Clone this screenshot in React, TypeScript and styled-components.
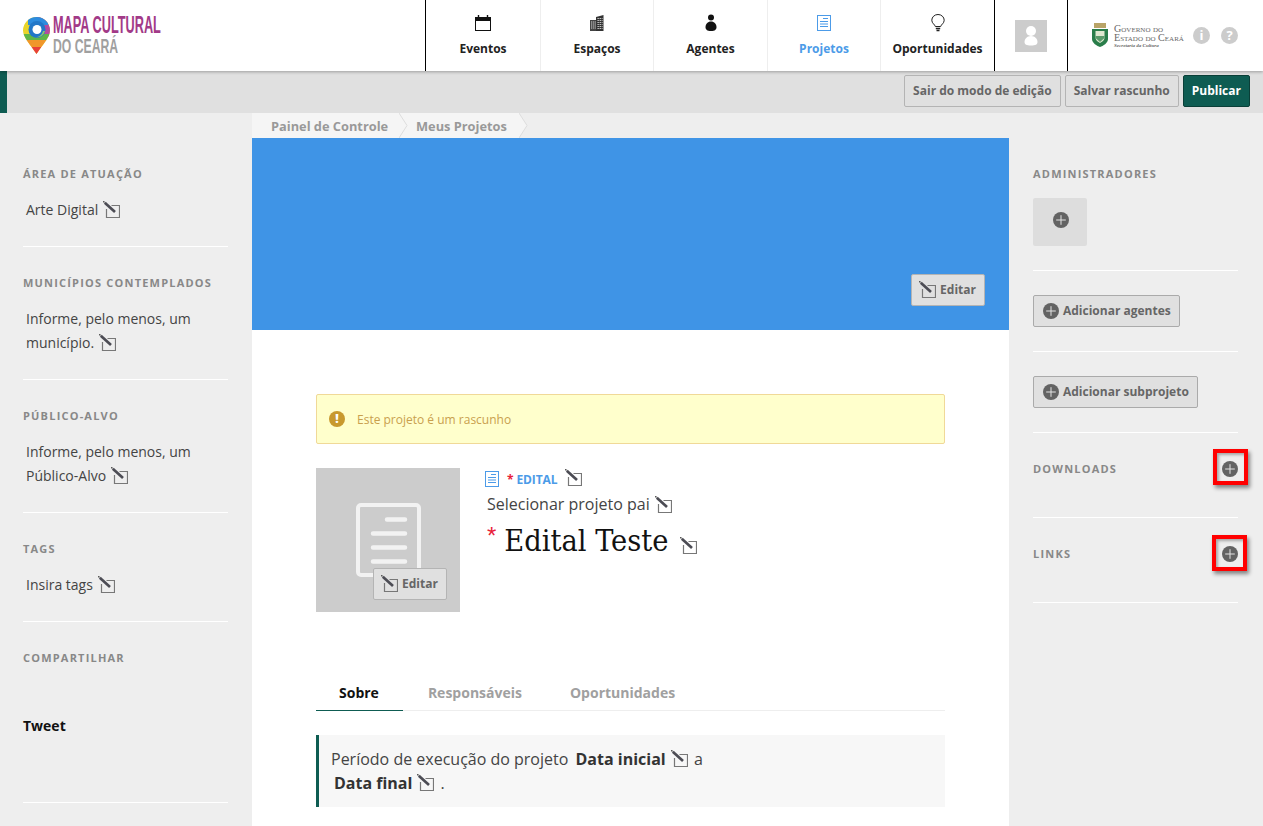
import React from "react";
import styled, { createGlobalStyle } from "styled-components";

const Global = createGlobalStyle`
  html, body { margin: 0; padding: 0; overflow: hidden; height: 826px; background: #eee; }
  * { box-sizing: border-box; }
  body { font-family: "Open Sans", "Liberation Sans", sans-serif; font-size: 14px; color: #333; }
`;

const Page = styled.div`width: 1263px; height: 826px; overflow: hidden; position: relative;`;
const Header = styled.header`
  height: 71px; background: #fff; display: flex; position: relative; z-index: 2;
  box-shadow: 0 1px 3px rgba(0,0,0,.3);
`;
const Logo = styled.div`display: flex; padding: 17px 0 0 23px; gap: 3px; width: 425px; flex: none;`;
const LogoText = styled.div`margin-top: -2px; white-space: nowrap;`;
const LogoLine = styled.div<{ $size: number; $scale: number; $color: string }>`
  font-family: "Liberation Sans", sans-serif; font-weight: 700; font-size: ${p => p.$size}px; line-height: 21px; height: 21px;
  width: 200px; transform: scaleX(${p => p.$scale}); transform-origin: left top; color: ${p => p.$color};
`;
const Nav = styled.nav`display: flex; border-left: 1px solid #000; border-right: 1px solid #000; flex: none;`;
const NavItem = styled.a<{ $w: number; $active?: boolean }>`
  width: ${p => p.$w}px; display: flex; flex-direction: column; align-items: center;
  border-right: 1px solid #eee; font-size: 12px; font-weight: 700;
  color: ${p => (p.$active ? "#4c9be8" : "#222")}; padding-top: 14px;
  &:last-child { border-right: 0; }
  svg { height: 18px; margin-bottom: 9px; }
  span { line-height: 16px; }
`;
const UserCell = styled.div`width: 73px; flex: none; border-right: 1px solid #000; display: flex; align-items: center; justify-content: center;`;
const UserPic = styled.div`width: 32px; height: 32px; background: #ccc;`;
const Gov = styled.div`flex: 1; display: flex; align-items: center; padding: 0 0 1px 23px;`;
const GovText = styled.div`
  font-family: "Liberation Serif", serif; font-variant: small-caps; font-size: 10.1px; line-height: 9px; color: #666;
  margin: 0 12px 0 5px; white-space: nowrap; padding-top: 3px; width: 67px;
  small { display: block; font-size: 5px; line-height: 7px; font-style: italic; font-variant: normal; font-weight: 700; }
`;
const Round = styled.div`
  width: 17px; height: 17px; border-radius: 50%; background: #ccc; color: #fff; flex: none; margin-right: 11px;
  display: flex; align-items: center; justify-content: center; font-size: 13px; font-weight: 700; line-height: 1;
`;
const EditBar = styled.div`
  height: 42px; background: #e0e0e0; border-left: 7px solid #0e5c52; display: flex; justify-content: flex-end;
  gap: 4px; padding: 4px 13px 0 0;
`;
const BarButton = styled.button<{ $primary?: boolean }>`
  height: 32px; padding: 0 8px 2px; border-radius: 2px; font: 700 12px "Open Sans", sans-serif;
  border: 1px solid ${p => (p.$primary ? "#0a3f38" : "#b4b4b4")};
  background: ${p => (p.$primary ? "#0e5c52" : "#e0e0e0")}; color: ${p => (p.$primary ? "#fff" : "#666")};
`;
const Columns = styled.div`display: grid; grid-template-columns: 252px 757px 254px; height: 713px;`;
const Side = styled.aside<{ $right?: boolean }>`
  background: #eee; padding: 25px ${p => (p.$right ? "25px" : "24px")} 0 ${p => (p.$right ? "24px" : "23px")};
`;
const Section = styled.section<{ $tall?: boolean }>`
  position: relative; border-bottom: 1px solid #fff; padding: 27px 0 24px;
  height: ${p => (p.$tall ? "181px" : "auto")};
`;
const SectionHead = styled.div`display: flex; justify-content: space-between; align-items: center;`;
const Title = styled.h4`
  margin: 0; font-size: 11px; line-height: 18px; font-weight: 700; letter-spacing: 1.2px; color: #888; text-transform: uppercase; white-space: nowrap;
`;
const SideText = styled.p`margin: 15px 0 0; padding-left: 3px; line-height: 24px; color: #444;`;
const Tweet = styled.div`margin-top: 47px; font-weight: 700; color: #111; line-height: 24px;`;
const Main = styled.main`background: #fff; position: relative;`;
const Crumbs = styled.div`height: 25px; display: flex; background: #eee;`;
const Crumb = styled.div<{ $w: number; $first?: boolean }>`
  width: ${p => p.$w}px; position: relative; background: #f5f5f5; color: #999; font-weight: 700; font-size: 12.8px; white-space: nowrap;
  line-height: 26px; padding-left: ${p => (p.$first ? 19 : 17)}px; flex: none;
  svg { position: absolute; left: 100%; top: 0; z-index: 1; }
`;
const Cover = styled.div`
  height: 192px; background: #3f94e6; display: flex; justify-content: flex-end; align-items: flex-end; padding: 24px;
`;
const EditButton = styled.button`
  height: 32px; padding: 0 8px 2px 7px; display: flex; align-items: center; gap: 4px; background: #e0e0e0; border: 1px solid #b4b4b4;
  border-radius: 2px; font: 700 12px "Open Sans", sans-serif; color: #666;
`;
const Content = styled.div`padding: 64px 64px 0;`;
const Alert = styled.div`
  height: 50px; background: #ffc; border: 1px solid #f0d998; border-radius: 2px; display: flex; align-items: center; gap: 12px;
  padding-left: 12px; font-size: 12px; color: #c9a04e;
`;
const AlertDot = styled.span`
  width: 16px; height: 16px; border-radius: 50%; background: #c8992e; color: #fff; font-weight: 800; font-size: 12px;
  display: flex; align-items: center; justify-content: center; line-height: 1;
`;
const ProjectHead = styled.div`display: flex; margin-top: 24px; height: 144px; gap: 24px;`;
const Avatar = styled.div`width: 144px; height: 144px; background: #ccc; position: relative; flex: none; display: flex; padding: 35px 0 0 40px;`;
const AvatarEdit = styled(EditButton)`position: absolute; left: 57px; top: 100px;`;
const ProjectInfo = styled.div`padding-top: 1px; flex: 1;`;
const TypeRow = styled.div`display: flex; align-items: center; height: 20px; font-size: 12px; font-weight: 700; color: #4c9be8; letter-spacing: -.1px;`;
const Star = styled.span`color: #e8213a; margin: 0 3px 0 7px;`;
const Parent = styled.div`margin: 3px 0 0 3px; font-size: 16px; line-height: 24px; color: #444; display: flex; align-items: center; gap: 5px;`;
const ProjectTitle = styled.h1`
  margin: 2px 0 0 3px; display: flex; align-items: center; font: 400 30.4px/46px "DejaVu Serif Condensed", "DejaVu Serif", serif;
  font-stretch: condensed; color: #111;
`;
const TitleStar = styled.span`color: #e8213a; font: 400 24px/24px "Liberation Sans", sans-serif; margin: -10px 8px 0 0;`;
const TitleEdit = styled.span`display: block; margin: 8px 0 0 12px; svg { display: block; }`;
const TypeEdit = styled.span`display: block; margin: -4px 0 0 8px; svg { display: block; }`;
const Tabs = styled.div`display: flex; margin-top: 63px; border-bottom: 1px solid #eee; height: 36px;`;
const Tab = styled.div<{ $active?: boolean }>`
  padding: 7px ${p => (p.$active ? 24 : 23)}px 0 ${p => (p.$active ? 23 : 25)}px; font-weight: 700; font-size: 14px; line-height: 22px;
  color: ${p => (p.$active ? "#111" : "#a0a0a0")}; height: 36px;
  border-bottom: 1px solid ${p => (p.$active ? "#0e5c52" : "transparent")};
`;
const Period = styled.div`
  margin-top: 24px; height: 72px; background: #f7f7f7; border-left: 3px solid #0e5c52; padding: 12px 12px; font-size: 16px; line-height: 24px; color: #444;
  b { color: #333; margin-left: 3px; }
  svg { margin: 0 2px -2px 5px; }
`;
const AddBox = styled.div`width: 54px; height: 48px; margin-top: 15px; background: #ddd; border-radius: 2px; display: flex; align-items: center; justify-content: center; padding: 0 0 4px 2px;`;
const AddButton = styled.button`
  height: 32px; padding: 0 8px 2px 9px; display: inline-flex; align-items: center; gap: 4px; background: #e0e0e0; border: 1px solid #aaa; border-radius: 2px;
  font: 700 12px "Open Sans", sans-serif; color: #666;
  svg { margin-top: 2px; }
`;
const ButtonSection = styled.section`border-bottom: 1px solid #fff; padding: 24px 0 24px; height: 81px;`;
const RedBox = styled.div<{ $right: number; $top: number }>`
  position: absolute; right: ${p => p.$right}px; top: ${p => p.$top}px; width: 35px; height: 36px;
  border: 4px solid #f00; box-shadow: 2px 3px 4px rgba(0,0,0,.45), inset 2px 2px 3px rgba(0,0,0,.3);
`;
const ListHead = styled(Section)`padding: 27px 0 0; height: 85px;`;
const HeadPlus = styled.span`display: flex; margin-right: 0;`;
const Inline = styled.span`display: inline-block; vertical-align: -3px; margin-left: 1px; svg { display: block; }`;

const Pencil = () => (
  <svg width={17} height={17} viewBox="0 0 17 17" fill="none">
    <path d="M8.500 4.500H16.500V16.500H3.500V8" stroke="#777" strokeWidth="1.200" />
    <path d="M1.800 1.800L12 11" stroke="#4c4c54" strokeWidth="2.700" />
    <path d="M0 .2l1.500 1.200" stroke="#555" strokeWidth="1.400" />
  </svg>
);
const Plus = ({ s = 16 }: { s?: number }) => (
  <svg width={s} height={s} viewBox="0 0 16 16">
    <circle cx="8" cy="8" r="8" fill="#636363" />
    <path d="M8 3.200V12.800M3.200 8H12.800" stroke="#e4e4e4" strokeWidth="1" />
  </svg>
);
const DocIcon = ({ c = "#4c9be8", s = 16 }: { c?: string; s?: number }) => (
  <svg width={s} height={s} viewBox="0 0 16 16" fill="none" stroke={c} strokeWidth="1">
    <rect x="1.500" y=".5" width="13" height="15" />
    <path d="M7 3.500H12M4 6.500H12M4 9H12M4 11.500H12" />
  </svg>
);
const Calendar = () => (
  <svg viewBox="0 0 18 18" width="18" fill="none">
    <rect x="1.500" y="3.500" width="15" height="13" stroke="#111" />
    <rect x="1.500" y="3" width="15" height="4" fill="#111" />
    <path d="M4.500 1V5M13.500 1V5" stroke="#111" strokeWidth="1.400" />
  </svg>
);
const Building = () => (
  <svg viewBox="0 0 18 18" width="18">
    <path d="M2 6h7v11H2z" fill="#444" />
    <path d="M8 3l7.500-2v16H8z" fill="#333" />
    <path d="M3 8h5M3 10h5M3 12h5M3 14h5M9.500 4.500h5M9.500 6.500h5M9.500 8.500h5M9.500 10.500h5M9.500 12.500h5M9.500 14.500h5" stroke="#e8e8e8" strokeWidth=".9" strokeDasharray="1.300 .8" />
  </svg>
);
const Person = () => (
  <svg viewBox="0 0 18 18" width="18" fill="#111">
    <circle cx="9" cy="3.500" r="3" />
    <path d="M9 7.500c3.300 0 5.500 2.500 5.500 5.500 0 2.500-1.500 4-5.500 4s-5.500-1.500-5.500-4c0-3 2.200-5.500 5.500-5.500z" />
  </svg>
);
const Bulb = () => (
  <svg viewBox="0 0 18 18" width="18" fill="none" stroke="#222" strokeWidth="1">
    <path d="M6.300 12.500C6 10.500 2.800 9.500 2.800 6.200a6.200 5.700 0 0 1 12.400 0c0 3.300-3.200 4.300-3.500 6.300z" />
    <path d="M6.800 14.500H11.200M7.500 16.500H10.500" strokeWidth="1.300" />
  </svg>
);
const PinLogo = () => (
  <svg width="27" height="37" viewBox="0 0 27 37">
    <defs>
      <clipPath id="pin"><path d="M13.500 0A13.500 13.500 0 0 1 27 13.500C27 20 20 27 13.500 37 7 27 0 20 0 13.500A13.500 13.500 0 0 1 13.500 0Z" /></clipPath>
    </defs>
    <g clipPath="url(#pin)">
      <rect width="27" height="37" fill="#e9d52a" />
      <rect x="14" width="13" height="20" fill="#b54aa0" />
      <rect x="5" y="0" width="20" height="8" fill="#2d8cde" />
      <rect y="17" width="27" height="7" fill="#5fb648" />
      <rect y="23" width="27" height="7" fill="#f0972b" />
      <rect y="30" width="27" height="7" fill="#e8403a" />
    </g>
    <circle cx="14" cy="12.500" r="8.500" fill="#2277c8" />
    <path d="M22 14c-1 4-5 7-9 6 3 0 6-2 7-6z" fill="#8ec96a" />
    <circle cx="14" cy="12.500" r="4.500" fill="#fff" />
  </svg>
);
const Crest = () => (
  <svg width="18" height="24" viewBox="0 0 18 24">
    <rect x="3" y="0" width="12" height="5" fill="#b9a468" />
    <path d="M1 6H17V16C17 20 12 23 9 24 6 23 1 20 1 16Z" fill="#2a7d4a" />
    <path d="M4.500 8H13.500V15C13.500 17 11 19 9 20 7 19 4.500 17 4.500 15Z" fill="#dfe8d0" />
    <path d="M4.500 13H13.500V15L9 19 4.500 15Z" fill="#5a9a6a" />
  </svg>
);
const UserGlyph = () => (
  <svg width="32" height="32" viewBox="0 0 32 32" fill="#fff">
    <circle cx="16" cy="11" r="5" />
    <path d="M16 16c4 0 6.500 3 6.500 6 0 2.500-2 3.500-6.500 3.500S9.500 24.500 9.500 22c0-3 2.500-6 6.500-6z" />
  </svg>
);
const BigDoc = () => (
  <svg width="65" height="74" viewBox="0 0 65 74" fill="none">
    <rect x="2" y="2" width="61" height="70" rx="3" stroke="#f2f2f2" strokeWidth="4" />
    <path d="M31 16.500H49M17 30.500H49M17 44.500H49M17 58.500H49" stroke="#f2f2f2" strokeWidth="4.500" strokeLinecap="round" />
  </svg>
);
const Chevron = () => (
  <svg width="9" height="25" viewBox="0 0 9 25">
    <path d="M0 0L8 12.500 0 25Z" fill="#f5f5f5" />
    <path d="M0 0L8 12.500 0 25" fill="none" stroke="#ddd" />
  </svg>
);

const nav = [
  { t: "Eventos", i: <Calendar />, w: 115 },
  { t: "Espaços", i: <Building />, w: 113 },
  { t: "Agentes", i: <Person />, w: 114 },
  { t: "Projetos", i: <DocIcon />, w: 113, a: true },
  { t: "Oportunidades", i: <Bulb />, w: 113 },
];

export default function App() {
  return (
    <Page>
      <Global />
      <Header>
        <Logo>
          <PinLogo />
          <LogoText>
            <LogoLine $size={23} $scale={0.553} $color="#a23a88">MAPA CULTURAL</LogoLine>
            <LogoLine $size={20} $scale={0.61} $color="#a0a0a0">DO CEARÁ</LogoLine>
          </LogoText>
        </Logo>
        <Nav>
          {nav.map(n => (
            <NavItem key={n.t} $w={n.w} $active={n.a}>{n.i}<span>{n.t}</span></NavItem>
          ))}
        </Nav>
        <UserCell><UserPic><UserGlyph /></UserPic></UserCell>
        <Gov>
          <Crest />
          <GovText>Governo do<br />Estado do Ceará<small>Secretaria da Cultura</small></GovText>
          <Round>i</Round>
          <Round>?</Round>
        </Gov>
      </Header>
      <EditBar>
        <BarButton>Sair do modo de edição</BarButton>
        <BarButton>Salvar rascunho</BarButton>
        <BarButton $primary>Publicar</BarButton>
      </EditBar>
      <Columns>
        <Side>
          <Section>
            <Title>Área de Atuação</Title>
            <SideText>Arte Digital <Inline><Pencil /></Inline></SideText>
          </Section>
          <Section>
            <Title>Municípios Contemplados</Title>
            <SideText>Informe, pelo menos, um município. <Inline><Pencil /></Inline></SideText>
          </Section>
          <Section>
            <Title>Público-Alvo</Title>
            <SideText>Informe, pelo menos, um Público-Alvo <Inline><Pencil /></Inline></SideText>
          </Section>
          <Section>
            <Title>Tags</Title>
            <SideText>Insira tags <Inline><Pencil /></Inline></SideText>
          </Section>
          <Section $tall>
            <Title>Compartilhar</Title>
            <Tweet>Tweet</Tweet>
          </Section>
        </Side>
        <Main>
          <Crumbs>
            <Crumb $w={147} $first>Painel de Controle<Chevron /></Crumb>
            <Crumb $w={120}>Meus Projetos<Chevron /></Crumb>
          </Crumbs>
          <Cover><EditButton><Pencil />Editar</EditButton></Cover>
          <Content>
            <Alert><AlertDot>!</AlertDot>Este projeto é um rascunho</Alert>
            <ProjectHead>
              <Avatar>
                <BigDoc />
                <AvatarEdit><Pencil />Editar</AvatarEdit>
              </Avatar>
              <ProjectInfo>
                <TypeRow><DocIcon /><Star>*</Star>EDITAL<TypeEdit><Pencil /></TypeEdit></TypeRow>
                <Parent>Selecionar projeto pai<Pencil /></Parent>
                <ProjectTitle><TitleStar>*</TitleStar>Edital Teste<TitleEdit><Pencil /></TitleEdit></ProjectTitle>
              </ProjectInfo>
            </ProjectHead>
            <Tabs>
              <Tab $active>Sobre</Tab>
              <Tab>Responsáveis</Tab>
              <Tab>Oportunidades</Tab>
            </Tabs>
            <Period>
              Período de execução do projeto <b>Data inicial</b><Pencil /> a<br />
              <b>Data final</b><Pencil /> .
            </Period>
          </Content>
        </Main>
        <Side $right>
          <Section>
            <Title>Administradores</Title>
            <AddBox><Plus /></AddBox>
          </Section>
          <ButtonSection><AddButton><Plus />Adicionar agentes</AddButton></ButtonSection>
          <ButtonSection><AddButton><Plus />Adicionar subprojeto</AddButton></ButtonSection>
          <ListHead>
            <SectionHead><Title>Downloads</Title><HeadPlus><Plus /></HeadPlus></SectionHead>
            <RedBox $right={-10} $top={16} />
          </ListHead>
          <ListHead>
            <SectionHead><Title>Links</Title><HeadPlus><Plus /></HeadPlus></SectionHead>
            <RedBox $right={-9} $top={17} />
          </ListHead>
        </Side>
      </Columns>
    </Page>
  );
}
